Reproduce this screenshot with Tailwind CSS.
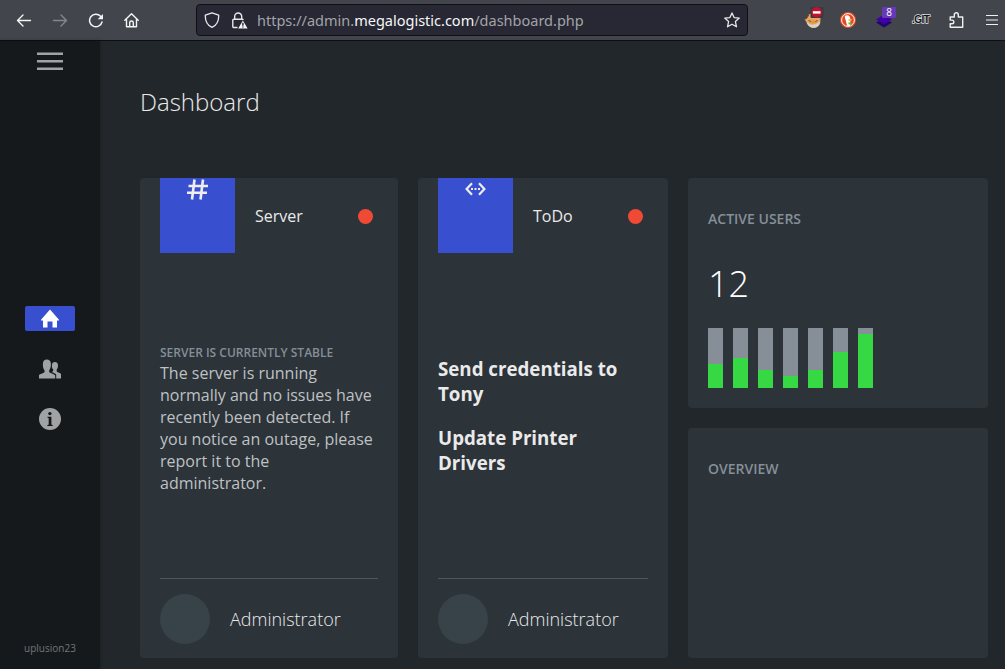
<!DOCTYPE html>
<html lang="en">
<head>
<meta charset="utf-8">
<title>Dashboard</title>
<script src="https://cdn.jsdelivr.net/npm/@tailwindcss/browser@4"></script>
</head>
<body class="w-[1005px] h-[669px] overflow-hidden flex flex-col bg-[#22272b] font-['Open_Sans',sans-serif] text-[#eaeaea]">
<header class="h-[41px] shrink-0 flex items-center bg-[#42454c] border-b border-[#0e0f14] text-[#f4f4f4]">
  <nav class="flex gap-5 ml-4 w-[180px] shrink-0">
    <svg class="w-4 h-4" viewBox="0 0 16 16" fill="none" stroke="currentColor" stroke-width="1.4" stroke-linecap="round" stroke-linejoin="round"><path d="M14.500 8.500H1.500M7 3L1.500 8.500 7 14"/></svg>
    <svg class="w-4 h-4 text-[#85878c]" viewBox="0 0 16 16" fill="none" stroke="currentColor" stroke-width="1.4" stroke-linecap="round" stroke-linejoin="round"><path d="M1.500 8.500h13M9 3l5.500 5.500L9 14"/></svg>
    <svg class="w-4 h-4" viewBox="0 0 16 16" fill="none" stroke="currentColor" stroke-width="1.5" stroke-linecap="round"><path d="M14 10A6.300 6.300 0 1 1 12.600 4.300"/><path d="M15 1.900v5.300H9.700z" fill="currentColor" stroke="none"/></svg>
    <svg class="w-4 h-4" viewBox="0 0 16 16" fill="none" stroke="currentColor" stroke-width="1.400" stroke-linecap="round" stroke-linejoin="round"><path d="M.8 8.300L7.500 1.700l6.700 6.600M2.500 7v7.800h10V7M5.700 14.500v-3.700a1.800 1.800 0 0 1 3.600 0v3.700"/></svg>
  </nav>
  <div class="w-[552px] h-8 shrink-0 flex items-center rounded border border-[#0f1016] bg-[#272833] pl-[7px] pr-[7px]">
    <svg class="w-4 h-4 shrink-0" viewBox="0 0 16 16" fill="none" stroke="#e8e8ea" stroke-width="1.300" stroke-linejoin="round"><path d="M8 .8l6.700 2.400c.2 6-1.700 9.800-6.700 12.200C3 13 1.100 9.200 1.300 3.200z"/></svg>
    <svg class="w-[17px] h-[17px] shrink-0 ml-[11px]" viewBox="0 0 17 17" fill="none" stroke="#e8e8ea" stroke-width="1.400"><path d="M3.700 7.200V4.500a3.500 3.500 0 0 1 7 0v2.700M6.500 15.500H2.800a1 1 0 0 1-1-1V8.300a1 1 0 0 1 1-1h8.700a1 1 0 0 1 .8.700"/><path d="M11.900 8.600l4.700 7.900H7.200z" fill="#f6f6f7" stroke="none"/><path d="M11.900 10.800v3M11.900 14.400v1.200" stroke="#23242f"/></svg>
    <div class="ml-[9px] pt-[2px] flex-1 whitespace-nowrap font-['Noto_Sans',sans-serif] text-[14.500px] text-[#a3a3a9]">https://admin.<span class="text-[#f6f6f8]">megalogistic.com</span>/dashboard.php</div>
    <svg class="w-4 h-4 shrink-0" viewBox="0 0 16 16" fill="none" stroke="#e8e8ea" stroke-width="1.300" stroke-linejoin="round"><path d="M8 .9l2.100 4.700 5.200.5-3.900 3.500 1.100 5.200L8 12.200l-4.500 2.600 1.100-5.200L.7 6.100l5.200-.5z"/></svg>
  </div>
  <div class="ml-14 flex items-center">
    <svg class="w-[22px] h-[26px]" viewBox="0 0 22 26"><path d="M.5 12.500l2.500-1.500 2-4h5l6.500 4-.3 5c-1 3.500-3.700 4.800-6.500 4.800S3.500 19 2.500 15z" fill="#e9a45f"/><path d="M2.500 14.500c1.500 1.500 3 2.800 5 3.200 3 0 5.500-1 8.700-3.200-.5 4-3.300 6.300-6.500 6.300S3.700 19 2.500 14.500z" fill="#d3d4cd"/><path d="M5.500 15c2 2.300 5 2.300 7.500 0l-3.500-2z" fill="#e9943f"/><path d="M.5 12.500l2.500-1.500 2-3.500M4.500 13.500l2.500 1M11.500 14.500l2-1" fill="none" stroke="#6b4a35"/><rect x="6.500" y="0" width="13" height="11" rx="1" fill="#393b42"/><circle cx="12.700" cy="5.300" r="5.200" fill="#c3122f"/><rect x="8.900" y="4.200" width="7.600" height="2.400" fill="#fff"/></svg>
    <svg class="w-4 h-4 ml-[14px]" viewBox="0 0 16 16"><circle cx="8" cy="8" r="8" fill="#e34b25"/><circle cx="8" cy="8" r="6.400" fill="none" stroke="#fff" stroke-width="1"/><path d="M5 3.800C7.500 2.300 10.500 3.800 10.300 7v6.500c-1 .6-2.200.6-3.200.3L5.800 8.500C5 6.500 4.700 5.300 5 3.800z" fill="#fff"/><path d="M8.500 7.300l3.500-.2-.5 1.500-3 .4z" fill="#f5b92e"/><path d="M8.500 10.200l3 .6v1.900l-3-.5z" fill="#5bb947"/></svg>
    <div class="relative w-5 h-6 ml-5">
      <svg class="w-5 h-6" viewBox="0 0 20 24"><path d="M0 14.500l8-4 8 4-8 5z" fill="#1d0867"/><path d="M0 11.500l8-5 8 5-8 5z" fill="#4100a8"/></svg>
      <span class="absolute left-[6px] -top-px w-[14px] h-[11px] rounded-[1px] bg-[#6738b8] text-center text-[10px] leading-[11px] font-['Noto_Sans',sans-serif]">8</span>
    </div>
    <span class="w-[17px] ml-4 text-[10px] leading-4 font-bold tracking-[-0.5px] font-['Liberation_Sans',sans-serif] text-[#111] whitespace-nowrap [-webkit-text-stroke:1.5px_#ddd] [paint-order:stroke_fill]">.GIT</span>
    <svg class="w-4 h-4 ml-5" viewBox="0 0 16 16" fill="none" stroke="#f0f0f0" stroke-width="1.400" stroke-linejoin="round"><path d="M1.200 5h4.100V2.700a2 2 0 0 1 4 0V5h4.400v10.300H1.200v-3.600H3a1.800 1.800 0 0 0 0-3.600H1.200z"/></svg>
    <svg class="w-3 h-4 ml-[21px]" viewBox="0 0 12 16" stroke="#f0f0f0" stroke-width="1.200"><path d="M0 3.500h12M0 8h12M0 12.500h12"/></svg>
  </div>
</header>
<div class="flex flex-1 min-h-0">
  <aside class="w-[100px] shrink-0 flex flex-col items-center bg-[#16191c] shadow-[0_0_4px_rgba(0,0,0,0.3)] text-[#a0a2a3]">
    <svg class="mt-[11px] w-[26px] h-[18px]" viewBox="0 0 26 18" stroke="#a0a2a3" stroke-width="2.500"><path d="M0 1.700h26M0 9.200h26M0 16.700h26"/></svg>
    <div class="mt-[236px] w-[50px] h-[25px] rounded-[2px] bg-[#3850d0] flex items-center justify-center">
      <svg class="w-[18px] h-[19px]" viewBox="0 0 18 19" fill="#fff"><path d="M9 .5l9 10.300v.7h-2V18.500h-4.500V12.500h-5v6H2v-7H0v-.7z"/></svg>
    </div>
    <svg class="mt-[27.500px] w-[22px] h-5" viewBox="0 0 22 20" fill="currentColor"><path d="M0 19.500v-3.500c1-1.300 4-1.500 5.500-2.800v-2C4.300 9.800 3.700 7.500 3.900 4.800 4 2 5.600.6 7.800.6s4 1.300 4.100 4.200c.1 2.700-.5 5-1.700 6.400v2c1.800 1.300 5 1.700 6 3.200v3.100z"/><path d="M12.600 13.100c.8-.4 1.300-.6 1.600-1v-1.500c-1-1.200-1.400-2.700-1.300-4.400.1-2 1.300-3.100 3-3.100s3 1.100 3.100 3.100c.1 1.800-.4 3.300-1.300 4.400v1.800c1.400 1 3.500 1.500 4.300 2.600v4.500h-4.800v-3.700c-.8-1.200-2.700-2-4.600-2.700z"/></svg>
    <svg class="mt-[29px] w-[22px] h-[22px]" viewBox="0 0 22 22"><circle cx="11" cy="11" r="11" fill="#a0a2a3"/><g fill="#16191c"><circle cx="10.900" cy="5.600" r="1.700"/><path d="M8.400 8.800h4v7.700l1.400.7v.8H8.300v-.8l1.400-.7v-6.300l-1.300-.6z"/></g></svg>
    <div class="mt-auto mb-[13px] text-[10px] leading-4 text-[#737577]">uplusion23</div>
  </aside>
  <main class="pl-10 pt-[41px]">
    <h1 class="h-10 leading-10 text-2xl font-light">Dashboard</h1>
    <div class="mt-14 flex gap-5 h-[480px]">
      <section class="w-[258px] px-5 rounded bg-[#2c3339] flex flex-col">
        <div class="flex items-center h-[75px]">
          <div class="w-[75px] h-[75px] bg-[#3850d0] flex justify-center"><svg class="mt-px w-[21px] h-[21px]" viewBox="0 0 21 21" fill="none" stroke="#eee" stroke-width="2.600"><path d="M7.500.5L5 20.500M16 .5l-2.500 20M1.500 7h19.500M0 13.700h20"/></svg></div>
          <span class="ml-5 text-base">Server</span>
          <i class="ml-auto mr-[5px] mt-[2px] w-[15px] h-[15px] rounded-full bg-[#f04a37]"></i>
        </div>
        <div class="flex-1 flex flex-col justify-center pt-[6px]">
          <h2 class="text-xs leading-[18px] font-semibold text-[#868f98] whitespace-nowrap">SERVER IS CURRENTLY STABLE</h2>
          <p class="text-base leading-[22px] text-[#bfc1c3]">The server is running normally and no issues have recently been detected. If you notice an outage, please report it to the administrator.</p>
        </div>
        <div class="h-20 border-t border-[#4f565d] pt-[15px] flex gap-5"><i class="w-[50px] h-[50px] rounded-full bg-[#374348]"></i><span class="leading-[50px] text-lg font-light">Administrator</span></div>
      </section>
      <section class="w-[250px] px-5 rounded bg-[#2c3339] flex flex-col">
        <div class="flex items-center h-[75px]">
          <div class="w-[75px] h-[75px] bg-[#3850d0] flex justify-center"><svg class="mt-[4px] w-[21px] h-[14px]" viewBox="0 0 21 14" fill="none" stroke="#eee" stroke-width="2.200"><path d="M7 1.200L1.600 7 7 12.800M14 1.200L19.400 7 14 12.800"/><path d="M6 7h2M9.500 7h2M13 7h2"/></svg></div>
          <span class="ml-5 text-base">ToDo</span>
          <i class="ml-auto mr-[5px] mt-[2px] w-[15px] h-[15px] rounded-full bg-[#f04a37]"></i>
        </div>
        <div class="flex-1 flex flex-col justify-center gap-[19px] text-[18.720px] leading-[25px] font-bold pb-[1px]">
          <h3>Send credentials to Tony</h3>
          <h3>Update Printer Drivers</h3>
        </div>
        <div class="h-20 border-t border-[#4f565d] pt-[15px] flex gap-5"><i class="w-[50px] h-[50px] rounded-full bg-[#374348]"></i><span class="leading-[50px] text-lg font-light">Administrator</span></div>
      </section>
      <div class="flex flex-col gap-5">
        <section class="w-[300px] h-[230px] px-5 pt-[31px] rounded bg-[#2c3339]">
          <h2 class="text-sm leading-5 font-semibold text-[#868f98]">ACTIVE USERS</h2>
          <div class="mt-[25px] h-[60px] leading-[60px] text-[36px] font-light text-white">12</div>
          <div class="mt-[14px] flex gap-[10px]">
            <div class="w-[15px] h-[60px] bg-[#868f98] flex items-end"><i class="w-full bg-[#36d944]" style="height:40%"></i></div>
            <div class="w-[15px] h-[60px] bg-[#868f98] flex items-end"><i class="w-full bg-[#36d944]" style="height:50%"></i></div>
            <div class="w-[15px] h-[60px] bg-[#868f98] flex items-end"><i class="w-full bg-[#36d944]" style="height:30%"></i></div>
            <div class="w-[15px] h-[60px] bg-[#868f98] flex items-end"><i class="w-full bg-[#36d944]" style="height:20%"></i></div>
            <div class="w-[15px] h-[60px] bg-[#868f98] flex items-end"><i class="w-full bg-[#36d944]" style="height:30%"></i></div>
            <div class="w-[15px] h-[60px] bg-[#868f98] flex items-end"><i class="w-full bg-[#36d944]" style="height:60%"></i></div>
            <div class="w-[15px] h-[60px] bg-[#868f98] flex items-end"><i class="w-full bg-[#36d944]" style="height:90%"></i></div>
          </div>
        </section>
        <section class="w-[300px] h-[230px] px-5 pt-[31px] rounded bg-[#2c3339]">
          <h2 class="text-sm leading-5 font-semibold text-[#868f98]">OVERVIEW</h2>
        </section>
      </div>
    </div>
  </main>
</div>
</body>
</html>
